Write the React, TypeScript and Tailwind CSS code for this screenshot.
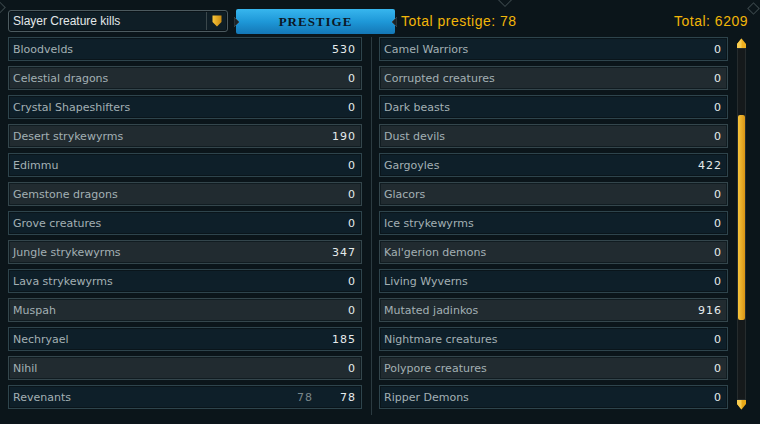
import React from "react";

type Row = { name: string; value: number; prestige?: number };

const left: Row[] = [
  { name: "Bloodvelds", value: 530 },
  { name: "Celestial dragons", value: 0 },
  { name: "Crystal Shapeshifters", value: 0 },
  { name: "Desert strykewyrms", value: 190 },
  { name: "Edimmu", value: 0 },
  { name: "Gemstone dragons", value: 0 },
  { name: "Grove creatures", value: 0 },
  { name: "Jungle strykewyrms", value: 347 },
  { name: "Lava strykewyrms", value: 0 },
  { name: "Muspah", value: 0 },
  { name: "Nechryael", value: 185 },
  { name: "Nihil", value: 0 },
  { name: "Revenants", value: 78, prestige: 78 },
];

const right: Row[] = [
  { name: "Camel Warriors", value: 0 },
  { name: "Corrupted creatures", value: 0 },
  { name: "Dark beasts", value: 0 },
  { name: "Dust devils", value: 0 },
  { name: "Gargoyles", value: 422 },
  { name: "Glacors", value: 0 },
  { name: "Ice strykewyrms", value: 0 },
  { name: "Kal'gerion demons", value: 0 },
  { name: "Living Wyverns", value: 0 },
  { name: "Mutated jadinkos", value: 916 },
  { name: "Nightmare creatures", value: 0 },
  { name: "Polypore creatures", value: 0 },
  { name: "Ripper Demons", value: 0 },
];

function KillRow({ row, index }: { row: Row; index: number }) {
  const odd = index % 2 === 1;
  return (
    <div
      className={
        odd
          ? "h-[24px] flex items-center border border-[#34464c] bg-[#212b30] shadow-[inset_0_0_0_1px_#111c21] pl-[4px] pr-[5px]"
          : "h-[24px] flex items-center border border-[#2e444c] bg-[#0e1f29] shadow-[inset_0_0_0_1px_#0a151b] pl-[4px] pr-[5px]"
      }
    >
      <span className="flex-1 text-[#a3b0b4]">{row.name}</span>
      {row.prestige !== undefined && (
        <span className="text-[#7a878b] mr-[27px] tracking-[1px]">{row.prestige}</span>
      )}
      <span className="text-[#e6ebec] tracking-[1px]">{row.value}</span>
    </div>
  );
}

function Shield() {
  return (
    <svg width="10" height="12" viewBox="0 0 10 12">
      <defs>
        <linearGradient id="sg" x1="0" x2="1" y1="0" y2="0">
          <stop offset="0" stopColor="#f8c63a" />
          <stop offset="1" stopColor="#c98a10" />
        </linearGradient>
      </defs>
      <path d="M0.5 0.5 H9.5 V7 L5 11.5 L0.5 7 Z" fill="url(#sg)" />
    </svg>
  );
}

export default function App() {
  return (
    <div
      className="w-[760px] h-[424px] relative overflow-hidden bg-[#0b151a] text-[11px] leading-none"
      style={{ fontFamily: "'DejaVu Sans', 'Liberation Sans', sans-serif" }}
    >
      {/* corner ornaments */}
      <div className="absolute left-[-5px] top-[3px] w-[9px] h-[9px] rotate-45 border border-[#3a464a]" />
      <div className="absolute left-[500px] top-[-5px] w-[10px] h-[10px] rotate-45 border border-[#3a464a] bg-[#0b151a]" />
      <div className="absolute left-[749px] top-[4px] w-[9px] h-[9px] rotate-45 border border-[#3a464a]" />

      {/* header */}
      <div className="h-[37px] pt-[9px] pl-[8px] pr-[12px] flex items-start">
        <div className="w-[220px] h-[22px] mt-[1px] flex items-center rounded-[3px] border border-[#4c5a5f] bg-[#0f1e26] shadow-[inset_0_0_0_1px_#0a1318]">
          <span
            className="flex-1 pl-[4px] text-[12px] text-[#e3e8e9]"
            style={{ fontFamily: "'Liberation Sans', sans-serif" }}
          >
            Slayer Creature kills
          </span>
          <div className="w-[1px] h-[18px] bg-[#3a474b]" />
          <div className="w-[20px] flex justify-center">
            <Shield />
          </div>
        </div>

        <div className="relative ml-[8px] w-[159px] h-[25px] rounded-[2px] bg-gradient-to-b from-[#37b6ee] via-[#1e98d8] to-[#1477b6] flex items-center justify-center">
          <span
            className="text-[#0c1826] text-[13px] font-bold tracking-[1px]"
            style={{ fontFamily: "'Liberation Serif', serif" }}
          >
            PRESTIGE
          </span>
          <svg className="absolute left-[-2px] top-[8px]" width="7" height="10" viewBox="0 0 7 10">
            <path d="M0 0 L5 5 L0 10 Z" fill="#1a2328" stroke="#3b4548" strokeWidth="1" />
          </svg>
          <svg className="absolute right-[-2px] top-[8px]" width="7" height="10" viewBox="0 0 7 10">
            <path d="M7 0 L2 5 L7 10 Z" fill="#1a2328" stroke="#3b4548" strokeWidth="1" />
          </svg>
        </div>

        <span
          className="ml-[6px] mt-[5px] text-[14px] text-[#f2b609] tracking-[0.5px]"
          style={{ fontFamily: "'Liberation Sans', sans-serif" }}
        >
          Total prestige: 78
        </span>
        <span
          className="ml-auto mt-[5px] text-[14px] text-[#f2b609] tracking-[0.5px]"
          style={{ fontFamily: "'Liberation Sans', sans-serif" }}
        >
          Total: 6209
        </span>
      </div>

      {/* list */}
      <div className="flex pl-[8px]">
        <div className="w-[354px] flex flex-col gap-[5px]">
          {left.map((r, i) => (
            <KillRow key={r.name} row={r} index={i} />
          ))}
        </div>
        <div className="ml-[9px] w-[1px] h-[378px] bg-[#2b3a40]" />
        <div className="ml-[7px] w-[349px] flex flex-col gap-[5px]">
          {right.map((r, i) => (
            <KillRow key={r.name} row={r} index={i} />
          ))}
        </div>

        {/* scrollbar */}
        <div className="ml-[8px] w-[11px] flex flex-col items-center">
          <svg width="11" height="10" viewBox="0 0 11 10" className="mt-[1px]">
            <path d="M1 10 V6 L5.5 0.5 L10 6 V10 Z" fill="#f0b020" />
            <path d="M1 10 V6 L5.5 0.5 L5.5 10 Z" fill="#f8cc50" />
          </svg>
          <div className="w-[9px] h-[352px] bg-[#15191b] border border-[#262c2e] flex flex-col">
            <div className="h-[66px]" />
            <div className="mx-auto w-[7px] h-[205px] rounded-[2px] bg-gradient-to-r from-[#f7c53b] to-[#d99413]" />
          </div>
          <svg width="11" height="10" viewBox="0 0 11 10">
            <path d="M1 0 V4 L5.5 9.5 L10 4 V0 Z" fill="#e8a818" />
            <path d="M1 0 V4 L5.5 9.5 L5.5 0 Z" fill="#f8cc50" />
          </svg>
        </div>
      </div>
    </div>
  );
}
